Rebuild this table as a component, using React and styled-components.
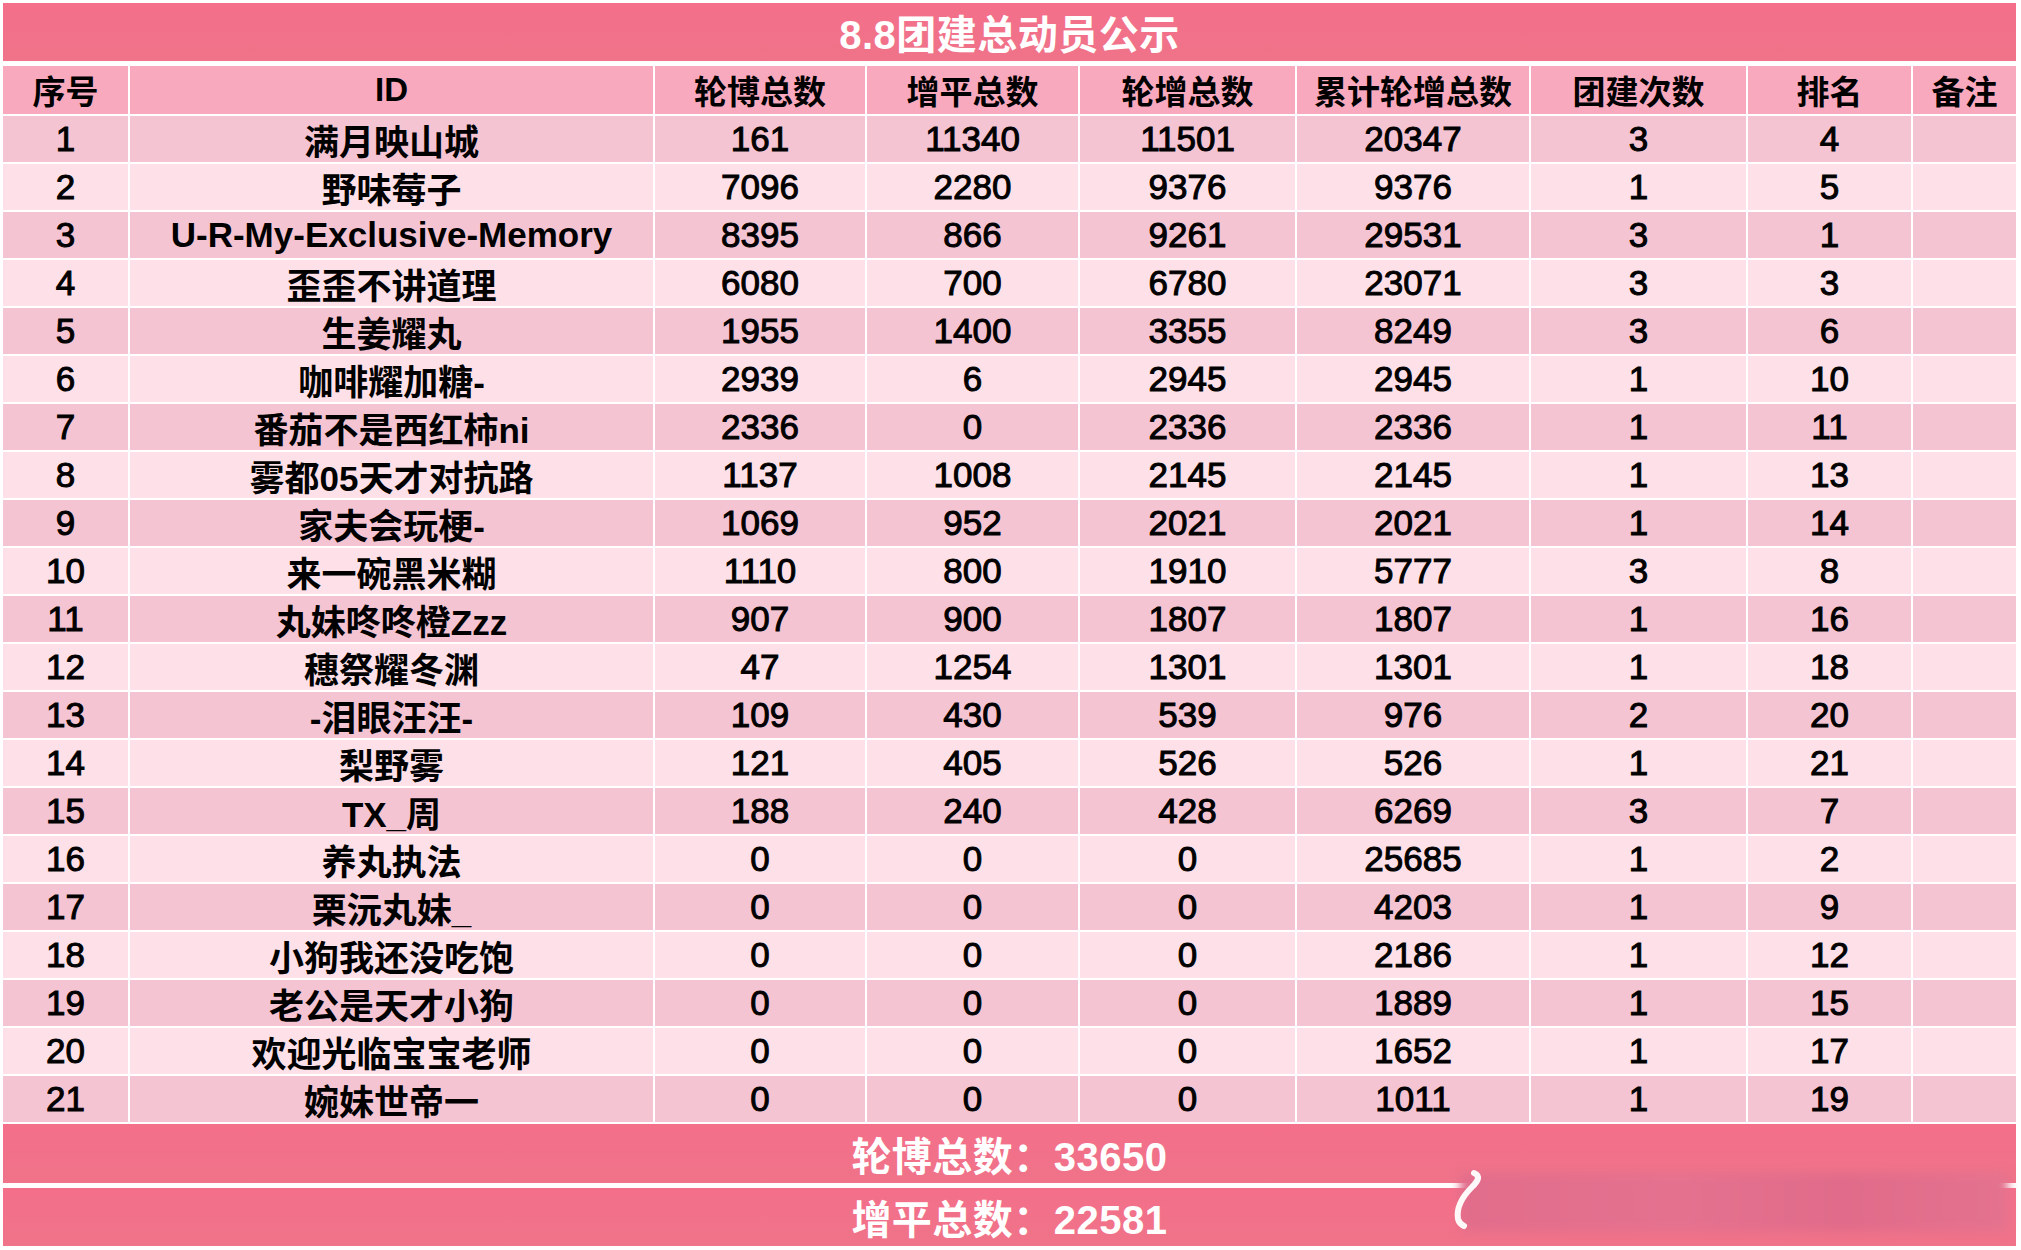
import React from "react";
import styled, { createGlobalStyle } from "styled-components";

const Global = createGlobalStyle`
  html, body { margin: 0; padding: 0; background: #ffffff; }
  body { font-family: "Liberation Sans", "Noto Sans CJK SC", sans-serif; }
`;

const COLS = "125px 523px 210px 211px 215px 232px 215px 163px 103px";

const Page = styled.div`
  width: 2013px;
  padding: 3px;
  display: flex;
  flex-direction: column;
  position: relative;
`;

const Banner = styled.div`
  height: ${(p) => p.$h}px;
  margin-bottom: ${(p) => p.$mb || 0}px;
  background: linear-gradient(180deg, #f46f8a 0%, #ef7389 100%);
  color: #ffffff;
  display: flex;
  align-items: center;
  justify-content: center;
  font-family: "Liberation Sans", "Noto Sans CJK SC", sans-serif;
  font-weight: 700;
  font-size: 40px;
  letter-spacing: 0.5px;
`;

const Table = styled.div`
  display: flex;
  flex-direction: column;
  gap: 2px;
  margin-bottom: 2px;
`;

const Row = styled.div`
  display: grid;
  grid-template-columns: ${COLS};
  column-gap: 2px;
  height: ${(p) => (p.$header ? 48 : 46)}px;
`;

const Cell = styled.div`
  background: ${(p) => p.$bg};
  display: flex;
  align-items: center;
  justify-content: center;
  color: #000000;
  font-family: "Liberation Sans", "Noto Sans CJK SC", sans-serif;
  font-size: ${(p) => (p.$header ? 33 : 35)}px;
  font-weight: ${(p) => (p.$header || p.$name ? 700 : 400)};
  -webkit-text-stroke: ${(p) => (p.$header || p.$name ? "0" : "1px #000")};
  white-space: nowrap;
  overflow: hidden;
`;

const Watermark = styled.div`
  position: absolute;
  left: 1460px;
  top: 1173px;
  width: 548px;
  height: 58px;
  background: linear-gradient(90deg, #e16d8b 0%, #e4728f 40%, #e06b8a 70%, #e4738f 100%);
  filter: blur(5px);
  border-radius: 6px;
`;

const WatermarkLogo = styled.svg`
  position: absolute;
  left: 1448px;
  top: 1166px;
  width: 36px;
  height: 66px;
`;

const headers = ["序号", "ID", "轮博总数", "增平总数", "轮增总数", "累计轮增总数", "团建次数", "排名", "备注"];

const rows = [
  ["1", "满月映山城", "161", "11340", "11501", "20347", "3", "4"],
  ["2", "野味莓子", "7096", "2280", "9376", "9376", "1", "5"],
  ["3", "U-R-My-Exclusive-Memory", "8395", "866", "9261", "29531", "3", "1"],
  ["4", "歪歪不讲道理", "6080", "700", "6780", "23071", "3", "3"],
  ["5", "生姜耀丸", "1955", "1400", "3355", "8249", "3", "6"],
  ["6", "咖啡耀加糖-", "2939", "6", "2945", "2945", "1", "10"],
  ["7", "番茄不是西红柿ni", "2336", "0", "2336", "2336", "1", "11"],
  ["8", "雾都05天才对抗路", "1137", "1008", "2145", "2145", "1", "13"],
  ["9", "家夫会玩梗-", "1069", "952", "2021", "2021", "1", "14"],
  ["10", "来一碗黑米糊", "1110", "800", "1910", "5777", "3", "8"],
  ["11", "丸妹咚咚橙Zzz", "907", "900", "1807", "1807", "1", "16"],
  ["12", "穗祭耀冬渊", "47", "1254", "1301", "1301", "1", "18"],
  ["13", "-泪眼汪汪-", "109", "430", "539", "976", "2", "20"],
  ["14", "梨野雾", "121", "405", "526", "526", "1", "21"],
  ["15", "TX_周", "188", "240", "428", "6269", "3", "7"],
  ["16", "养丸执法", "0", "0", "0", "25685", "1", "2"],
  ["17", "栗沅丸妹_", "0", "0", "0", "4203", "1", "9"],
  ["18", "小狗我还没吃饱", "0", "0", "0", "2186", "1", "12"],
  ["19", "老公是天才小狗", "0", "0", "0", "1889", "1", "15"],
  ["20", "欢迎光临宝宝老师", "0", "0", "0", "1652", "1", "17"],
  ["21", "婉妹世帝一", "0", "0", "0", "1011", "1", "19"],
];

export default function App() {
  return (
    <>
      <Global />
      <Page>
        <Banner $h={58} $mb={5}>8.8团建总动员公示</Banner>
        <Table>
          <Row $header>
            {headers.map((h) => (
              <Cell key={h} $header $bg="#f9a9be">{h}</Cell>
            ))}
          </Row>
          {rows.map((r, i) => {
            const bg = i % 2 === 0 ? "#f5c4d3" : "#fde0e8";
            return (
              <Row key={r[0]}>
                {r.map((v, j) => (
                  <Cell key={j} $bg={bg} $name={j === 1}>{v}</Cell>
                ))}
                <Cell $bg={bg} />
              </Row>
            );
          })}
        </Table>
        <Banner $h={59} $mb={5}>轮博总数：33650</Banner>
        <Banner $h={58}>增平总数：22581</Banner>
        <Watermark />
        <WatermarkLogo viewBox="0 0 36 66">
          <path d="M26 7 C33 10 30 15 24 21 C14 31 8 41 10 53 C11 57 14 59 16 60" fill="none" stroke="#ffffff" strokeWidth="6" strokeLinecap="round" opacity="0.95" />
        </WatermarkLogo>
      </Page>
    </>
  );
}
